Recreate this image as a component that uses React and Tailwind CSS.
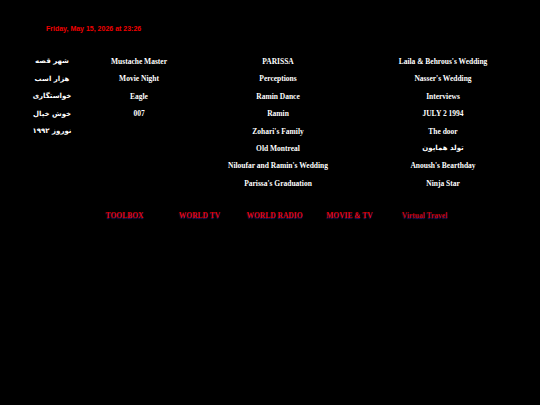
import React from 'react';

const rows = [
  ['شهر قصه', 'Mustache Master', 'PARISSA', "Laila & Behrous's Wedding"],
  ['هزار اسب', 'Movie Night', 'Perceptions', "Nasser's Wedding"],
  ['خواستگاری', 'Eagle', 'Ramin Dance', 'Interviews'],
  ['خوش خیال', '007', 'Ramin', 'JULY 2 1994'],
  ['نوروز ۱۹۹۲', '', "Zohari's Family", 'The door'],
  ['', '', 'Old Montreal', 'تولد همایون'],
  ['', '', "Niloufar and Ramin's Wedding", "Anoush's Bearthday"],
  ['', '', "Parissa's Graduation", 'Ninja Star'],
];

const links = [
  { label: 'TOOLBOX', color: 'text-[#e00000]' },
  { label: 'WORLD TV', color: 'text-[#e00000]' },
  { label: 'WORLD RADIO', color: 'text-[#e00000]' },
  { label: 'MOVIE & TV', color: 'text-[#e00000]' },
  { label: 'Virtual Travel', color: 'text-[#c00000]' },
];

const isFarsi = (s) => /[\u0600-\u06FF]/.test(s);

export default function App() {
  return (
    <div className="w-[540px] h-[405px] bg-black overflow-hidden font-['Liberation_Serif','DejaVu_Sans',serif]">
      <div className="pt-[24px] pl-[46px] h-[53px] text-[7px] leading-[10px] font-bold text-[#f00000] font-['Liberation_Sans',Arial,sans-serif]">
        Friday, May 15, 2026 at 23:26
      </div>

      <div className="grid grid-cols-[104px_70px_208px_122px] text-white font-bold text-[7.5px]">
        {rows.map((row, i) =>
          row.map((cell, j) => (
            <div
              key={i + '-' + j}
              dir={isFarsi(cell) ? 'rtl' : 'ltr'}
              className={
                'h-[17.4px] flex items-center justify-center whitespace-nowrap ' +
                (isFarsi(cell) ? "font-['DejaVu_Sans',sans-serif] text-[7px]" : '')
              }
            >
              {cell}
            </div>
          ))
        )}
      </div>

      <div className="flex pl-[87px] pt-[18px] text-[7.5px] font-bold">
        {links.map((l) => (
          <a
            key={l.label}
            href="#"
            className={'w-[75px] text-center whitespace-nowrap no-underline [text-shadow:0_1px_1px_#20207a] ' + l.color}
          >
            {l.label}
          </a>
        ))}
      </div>
    </div>
  );
}
